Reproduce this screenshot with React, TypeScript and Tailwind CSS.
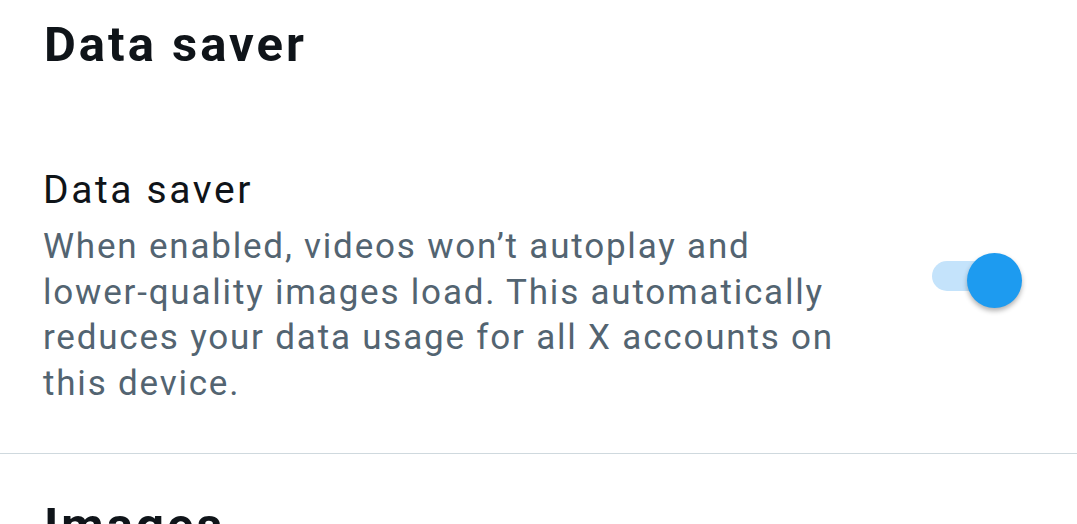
const lines = [
  'When enabled, videos won’t autoplay and',
  'lower-quality images load. This automatically',
  'reduces your data usage for all X accounts on',
  'this device.',
];

export default function App() {
  return (
    <div className="w-[1077px] h-[524px] overflow-hidden bg-white font-['Roboto',sans-serif]">
      <h1 className="pl-[44px] pt-[15px] text-[49px] leading-[60px] font-bold tracking-[3px] text-[#0f1419]">
        Data saver
      </h1>

      <div className="flex items-start pl-[43px] pt-[91px] pb-[47px] border-b border-[#cfd9de]">
        <div className="w-[860px]">
          <div className="text-[39px] leading-[48px] tracking-[2.6px] text-[#0f1419]">Data saver</div>
          <p className="mt-[10px] text-[35px] leading-[45.5px] tracking-[1.8px] text-[#536471]">
            {lines.map((l) => (
              <span key={l} className="block whitespace-nowrap">
                {l}
              </span>
            ))}
          </p>
        </div>
        <div className="ml-[29px] mt-[95px] relative w-[58px] h-[30px]">
          <div className="absolute inset-0 rounded-full bg-[#c4e3fb]" />
          <div className="absolute left-[35px] top-[-8px] w-[55px] h-[55px] rounded-full bg-[#1d9bf0] shadow-[0_3px_5px_rgba(0,0,0,0.3)]" />
        </div>
      </div>

      <h2 className="pl-[44px] pt-[42px] text-[49px] leading-[60px] font-bold tracking-[3px] text-[#0f1419]">
        Images
      </h2>
    </div>
  );
}
